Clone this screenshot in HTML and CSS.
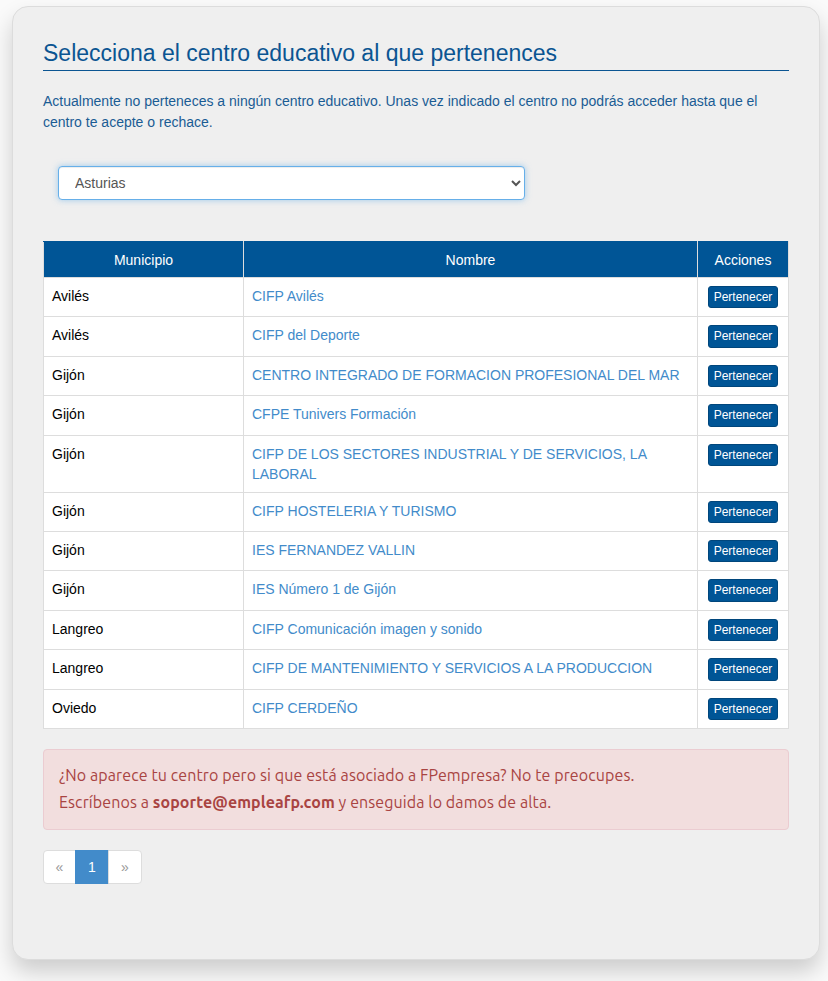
FILE: index.html
```html
<!DOCTYPE html>
<html lang="es">
<head>
<meta charset="utf-8">
<title>Selecciona centro</title>
<link rel="stylesheet" href="styles.css">
</head>
<body>
<div class="card">
  <h1 class="title">Selecciona el centro educativo al que pertenences</h1>
  <p class="intro">Actualmente no perteneces a ningún centro educativo. Unas vez indicado el centro no podrás acceder hasta que el centro te acepte o rechace.</p>
  <div class="select-wrap">
    <select class="province">
      <option>Asturias</option>
    </select>
  </div>
  <table class="centers">
    <thead>
      <tr><th class="c-mun">Municipio</th><th>Nombre</th><th class="c-act">Acciones</th></tr>
    </thead>
    <tbody>
      <tr><td>Avilés</td><td><a href="#">CIFP Avilés</a></td><td class="act"><button class="btn">Pertenecer</button></td></tr>
      <tr><td>Avilés</td><td><a href="#">CIFP del Deporte</a></td><td class="act"><button class="btn">Pertenecer</button></td></tr>
      <tr><td>Gijón</td><td><a href="#">CENTRO INTEGRADO DE FORMACION PROFESIONAL DEL MAR</a></td><td class="act"><button class="btn">Pertenecer</button></td></tr>
      <tr><td>Gijón</td><td><a href="#">CFPE Tunivers Formación</a></td><td class="act"><button class="btn">Pertenecer</button></td></tr>
      <tr><td>Gijón</td><td><a href="#">CIFP DE LOS SECTORES INDUSTRIAL Y DE SERVICIOS, LA LABORAL</a></td><td class="act"><button class="btn">Pertenecer</button></td></tr>
      <tr><td>Gijón</td><td><a href="#">CIFP HOSTELERIA Y TURISMO</a></td><td class="act"><button class="btn">Pertenecer</button></td></tr>
      <tr><td>Gijón</td><td><a href="#">IES FERNANDEZ VALLIN</a></td><td class="act"><button class="btn">Pertenecer</button></td></tr>
      <tr><td>Gijón</td><td><a href="#">IES Número 1 de Gijón</a></td><td class="act"><button class="btn">Pertenecer</button></td></tr>
      <tr><td>Langreo</td><td><a href="#">CIFP Comunicación imagen y sonido</a></td><td class="act"><button class="btn">Pertenecer</button></td></tr>
      <tr><td>Langreo</td><td><a href="#">CIFP DE MANTENIMIENTO Y SERVICIOS A LA PRODUCCION</a></td><td class="act"><button class="btn">Pertenecer</button></td></tr>
      <tr><td>Oviedo</td><td><a href="#">CIFP CERDEÑO</a></td><td class="act"><button class="btn">Pertenecer</button></td></tr>
    </tbody>
  </table>
  <div class="alert">¿No aparece tu centro pero si que está asociado a FPempresa? No te preocupes.<br>Escríbenos a <strong>soporte@empleafp.com</strong> y enseguida lo damos de alta.</div>
  <ul class="pager">
    <li class="pg">«</li>
    <li class="pg active">1</li>
    <li class="pg">»</li>
  </ul>
</div>
</body>
</html>
```
FILE: styles.css
```css
html, body {
  margin: 0;
  padding: 0;
  background: #fafafa;
}
body {
  padding: 6px 8px 22px 12px;
  font-family: "Liberation Sans", Arial, sans-serif;
  font-size: 14px;
  line-height: 20px;
  color: #111;
}
.card {
  background: #efefef;
  border: 1px solid #dcdcdc;
  border-radius: 16px;
  box-shadow: 0 12px 22px rgba(0, 0, 0, 0.18);
  padding: 30px 30px 74px 30px;
  height: 954px;
  box-sizing: border-box;
}
.title {
  margin: 0;
  font-family: "Liberation Sans", Arial, sans-serif;
  font-weight: normal;
  font-size: 23px;
  line-height: 31px;
  color: #0b5592;
  border-bottom: 1px solid #0b5592;
  padding: 1px 0 1px;
}
.intro {
  margin: 20px 0 0;
  font-family: "Liberation Sans", Arial, sans-serif;
  font-size: 14px;
  line-height: 21px;
  color: #1a5c94;
}
.select-wrap {
  padding: 33px 15px 0;
}
.province {
  display: block;
  width: 467px;
  height: 34px;
  padding: 6px 12px 6px 12px;
  font-family: "Liberation Sans", Arial, sans-serif;
  font-size: 14px;
  color: #555;
  background: #fff;
  border: 1px solid #66afe9;
  border-radius: 4px;
  box-shadow: inset 0 1px 1px rgba(0,0,0,.075), 0 0 6px rgba(102,175,233,.6);
}
.centers {
  margin-top: 41px;
  width: 100%;
  border-collapse: collapse;
  background: #fff;
}
.centers th {
  background: #005596;
  color: #fff;
  font-weight: normal;
  text-align: center;
  padding: 8px 8px 7px;
  height: 20px;
  border: 1px solid #ddd;
  border-top-color: #005596;
}
.centers th.c-mun { width: 183px; }
.centers th.c-act { width: 74px; }
.centers td {
  padding: 8px;
  vertical-align: top;
  border: 1px solid #ddd;
  color: #000;
}
.centers td a {
  color: #428bca;
  text-decoration: none;
}
.centers td.act {
  text-align: center;
  padding-top: 8px;
  padding-bottom: 8px;
}
.btn {
  display: inline-block;
  font-family: "Liberation Sans", Arial, sans-serif;
  font-size: 12px;
  line-height: 18.4px;
  padding: 1px 5px;
  color: #fff;
  background: #005596;
  border: 1px solid #00467c;
  border-radius: 3px;
  vertical-align: top;
}
.alert {
  margin-top: 20px;
  padding: 12px 15px 13px;
  background: #f2dede;
  border: 1px solid #ebccd1;
  border-radius: 4px;
  color: #a94442;
  font-family: "Ubuntu", "Roboto", sans-serif;
  font-size: 16px;
  line-height: 27px;
  letter-spacing: 0.1px;
}
.alert strong { font-weight: bold; }
.pager {
  list-style: none;
  margin: 20px 0 0;
  padding: 0;
  display: flex;
}
.pg {
  width: 31px;
  height: 32px;
  line-height: 32px;
  text-align: center;
  background: #fff;
  border: 1px solid #ddd;
  color: #999;
  font-size: 14px;
  margin-left: -1px;
}
.pg:first-child {
  margin-left: 0;
  border-radius: 4px 0 0 4px;
}
.pg:last-child {
  width: 32px;
  border-radius: 0 4px 4px 0;
}
.pg.active {
  background: #428bca;
  border-color: #428bca;
  color: #fff;
  width: 32px;
}
```
